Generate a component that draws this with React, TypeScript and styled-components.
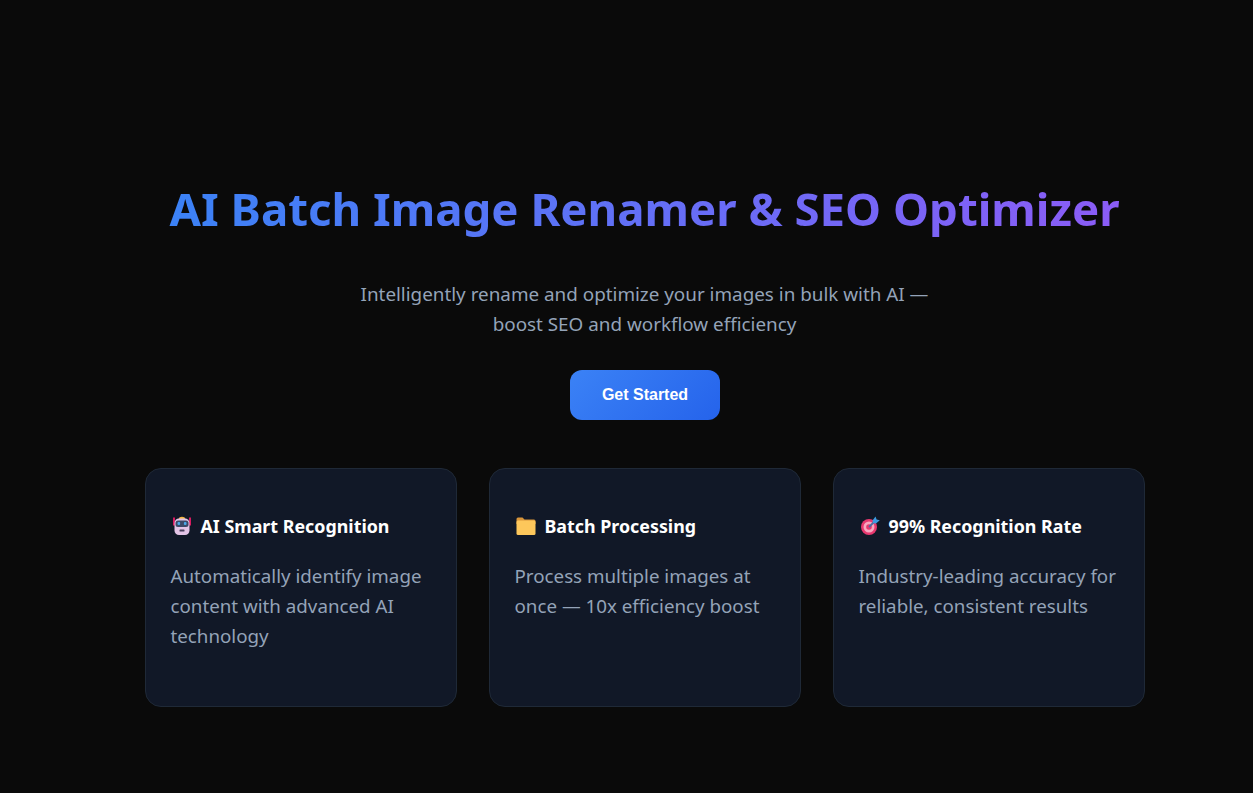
import React from 'react';
import styled, { createGlobalStyle } from 'styled-components';

const GlobalStyle = createGlobalStyle`
  html, body {
    margin: 0;
    padding: 0;
    background: #0a0a0a;
  }
`;

const RobotIcon = () => (
  <svg width="20" height="20" viewBox="0 1 20 20">
    <rect x="1" y="2.5" width="2" height="8" fill="#d81b60" />
    <rect x="17" y="2.5" width="2" height="8" fill="#d81b60" />
    <path d="M6.5 4 Q7 1.8 10 1.8 Q13 1.8 13.5 4 Z" fill="#f4b63f" />
    <rect x="2.5" y="3.5" width="15" height="16.5" rx="4.5" fill="#e3c4e6" />
    <rect x="3.5" y="5.5" width="13" height="6.5" rx="2.5" fill="#3b4a68" />
    <rect x="5.5" y="7" width="2.6" height="3" rx="1" fill="#4aa8e8" />
    <rect x="11.9" y="7" width="2.6" height="3" rx="1" fill="#4aa8e8" />
    <rect x="7.5" y="14.5" width="5" height="2" rx="0.6" fill="#4a3f5c" />
  </svg>
);

const FolderIcon = () => (
  <svg width="20" height="20" viewBox="0 0 20 20">
    <path d="M0.5 3 Q0.5 1.5 2 1.5 H6.5 L8.5 3.5 H18 Q19.5 3.5 19.5 5 V8 H0.5 Z" fill="#d9953a" />
    <path d="M0.5 6 Q0.5 4.5 2 4.5 H18 Q19.5 4.5 19.5 6 V17.5 Q19.5 19 18 19 H2 Q0.5 19 0.5 17.5 Z" fill="#fdc75b" />
  </svg>
);

const TargetIcon = () => (
  <svg width="20" height="20" viewBox="0 0 20 20">
    <circle cx="9" cy="11" r="8" fill="#e8386f" />
    <circle cx="9" cy="11" r="5.5" fill="#f7a8c0" />
    <circle cx="9" cy="11" r="2.8" fill="#e8386f" />
    <path d="M9 11 L15.5 4.5" stroke="#4a6fa5" strokeWidth="1.8" />
    <path d="M12.5 4.5 L15.5 0.5 L16.6 3.4 L19.8 4.2 L16 7.5 L13 7 Z" fill="#3d9be0" />
  </svg>
);

const features = [
  {
    icon: <RobotIcon />,
    title: 'AI Smart Recognition',
    text: 'Automatically identify image content with advanced AI technology',
  },
  {
    icon: <FolderIcon />,
    title: 'Batch Processing',
    text: 'Process multiple images at once — 10x efficiency boost',
  },
  {
    icon: <TargetIcon />,
    title: '99% Recognition Rate',
    text: 'Industry-leading accuracy for reliable, consistent results',
  },
];

export default function App() {
  return (
    <>
      <GlobalStyle />
      <Page>
        <Hero>
          <Title>AI Batch Image Renamer &amp; SEO Optimizer</Title>
          <Subtitle>
            Intelligently rename and optimize your images in bulk with AI — boost SEO and workflow
            efficiency
          </Subtitle>
          <StartButton>Get Started</StartButton>
        </Hero>
        <Cards>
          {features.map((f) => (
            <Card key={f.title}>
              <CardTitle>
                {f.icon}
                {f.title}
              </CardTitle>
              <CardText>{f.text}</CardText>
            </Card>
          ))}
        </Cards>
      </Page>
    </>
  );
}

const Page = styled.main`
  box-sizing: border-box;
  height: 793px;
  padding: 172px 70px 0 106px;
  background: #0a0a0a;
  font-family: 'Noto Sans', 'Open Sans', sans-serif;
  overflow: hidden;
`;

const Hero = styled.section`
  display: flex;
  flex-direction: column;
  align-items: center;
  text-align: center;
`;

const Title = styled.h1`
  margin: 0 0 35px;
  font-size: 45.6px;
  font-weight: 700;
  line-height: 72px;
  white-space: nowrap;
  background: linear-gradient(90deg, #3b82f6, #8b5cf6);
  -webkit-background-clip: text;
  background-clip: text;
  color: transparent;
`;

const Subtitle = styled.p`
  width: 600px;
  margin: 0 0 31px;
  color: #94a3b8;
  font-size: 18.85px;
  line-height: 30px;
`;

const StartButton = styled.button`
  width: 150px;
  height: 50px;
  padding: 0 0 0 1px;
  border: none;
  border-radius: 12px;
  background: linear-gradient(135deg, #3b82f6, #2563eb);
  color: #fff;
  font-family: 'Liberation Sans', Arial, sans-serif;
  font-size: 16px;
  font-weight: 700;
`;

const Cards = styled.section`
  display: grid;
  grid-template-columns: repeat(3, 312px);
  gap: 32px;
  justify-content: center;
  margin-top: 48px;
`;

const Card = styled.article`
  box-sizing: border-box;
  height: 239px;
  padding: 42px 24px 0 25px;
  border: 1px solid #1f2937;
  border-radius: 16px;
  background: #111827;
`;

const CardTitle = styled.h3`
  display: flex;
  align-items: center;
  gap: 9px;
  margin: 0 0 20px;
  padding-left: 1px;
  color: #fff;
  font-size: 17.85px;
  font-weight: 700;
  line-height: 30px;
  white-space: nowrap;
`;

const CardText = styled.p`
  margin: 0;
  color: #94a3b8;
  font-size: 18.75px;
  line-height: 30px;
`;
